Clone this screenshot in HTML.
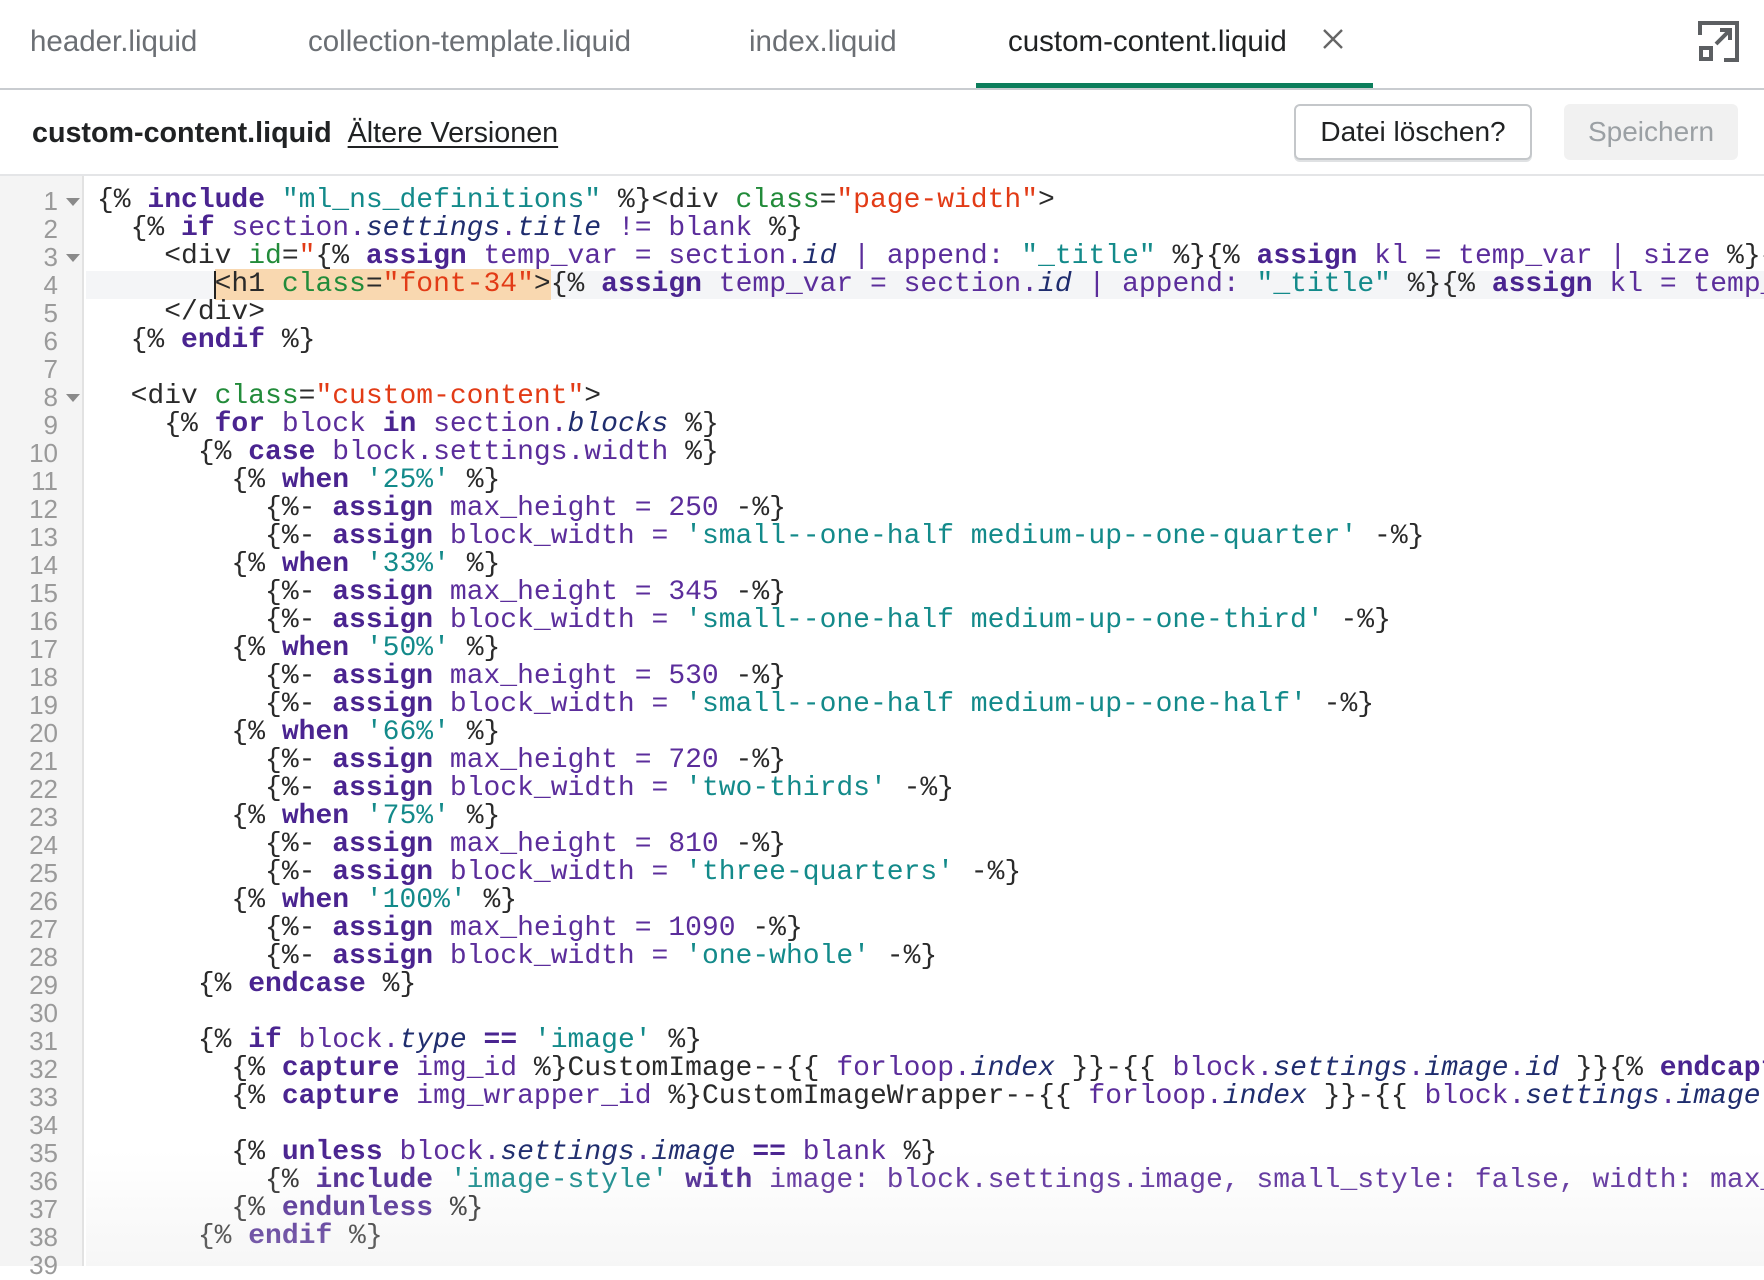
<!DOCTYPE html>
<html><head><meta charset="utf-8"><style>
*{margin:0;padding:0;box-sizing:border-box}
body{width:1764px;height:1266px;overflow:hidden;background:#fff;font-family:"Liberation Sans",sans-serif;position:relative}
.tab{position:absolute;top:22px;font-size:29.5px;color:#6b6f74;white-space:nowrap;line-height:40px}
#tabline{position:absolute;left:0;top:88px;width:1764px;height:2px;background:#c9ccd0}
#green{position:absolute;left:976px;top:83px;width:397px;height:5px;background:#0c7e5c}
#hdr2{position:absolute;top:113px;left:32px;font-size:28.7px;line-height:40px;white-space:nowrap;color:#202223}
.btn{position:absolute;top:104px;height:56px;border-radius:6px;font-size:28px;line-height:56px;text-align:center}
#sep{position:absolute;left:0;top:174px;width:1764px;height:2px;background:#e4e5e7}
#gutter{position:absolute;left:0;top:176px;width:84px;height:1090px;background:#f4f4f4;border-right:2px solid #e2e2e2}
.ln{position:absolute;left:0;width:58px;text-align:right;font-family:"Liberation Sans",sans-serif;font-size:26px;color:#9a9a9a;line-height:28px}
.fold{position:absolute;left:66px;width:0;height:0;border-left:7px solid transparent;border-right:7px solid transparent;border-top:8px solid #8a8a8a}
#code{position:absolute;left:97px;top:187px;width:1667px;height:1079px;overflow:hidden;font-family:"Liberation Mono",monospace;font-size:28px;line-height:28px;white-space:pre;color:#2a2a2a}
.l{height:28px}
.k{color:#4a2490;font-weight:bold}
.v{color:#5b2d9b}
.i{color:#1f2d6e;font-style:italic}
.s{color:#138a8a}
.a{color:#228b3a}
.r{color:#e23b16}
.sel{background:#f9d8b0}
#hl{position:absolute;left:86px;top:271px;width:1678px;height:28px;background:#f4f5f7}
#cur{position:absolute;left:214px;top:271px;width:2px;height:28px;background:#222}
#shade{position:absolute;left:86px;top:1150px;width:1678px;height:116px;background:linear-gradient(to bottom,rgba(255,255,255,0),rgba(230,230,230,.35));pointer-events:none}
</style></head><body>
<div class="tab" style="left:30px">header.liquid</div>
<div class="tab" style="left:308px">collection-template.liquid</div>
<div class="tab" style="left:749px">index.liquid</div>
<div class="tab" style="left:1008px;color:#202223">custom-content.liquid</div>
<svg style="position:absolute;left:1322px;top:28px" width="22" height="22" viewBox="0 0 22 22"><path d="M2 2L20 20M20 2L2 20" stroke="#666" stroke-width="2.4"/></svg>
<svg style="position:absolute;left:1698px;top:21px" width="41" height="41" viewBox="0 0 41 41" fill="none" stroke="#5c5f62" stroke-width="4"><path d="M2 14V2H39V39H26"/><rect x="3" y="27" width="10" height="11"/><path d="M18 23L32 9M22 9H32V19"/></svg>
<div id="tabline"></div><div id="green"></div>
<div id="hdr2"><b>custom-content.liquid</b><span style="margin-left:16px;text-decoration:underline;text-underline-offset:4px">Ältere Versionen</span></div>
<div class="btn" style="left:1294px;width:238px;border:2px solid #c4c7ca;box-shadow:0 2px 0 #dfe1e3;color:#202223;line-height:52px">Datei löschen?</div>
<div class="btn" style="left:1564px;width:174px;background:#f1f1f1;color:#9ba0a4">Speichern</div>
<div id="sep"></div>
<div id="gutter"></div>
<div id="hl"></div>
<div class="ln" style="top:187px">1</div><div class="fold" style="top:198px"></div>
<div class="ln" style="top:215px">2</div>
<div class="ln" style="top:243px">3</div><div class="fold" style="top:254px"></div>
<div class="ln" style="top:271px">4</div>
<div class="ln" style="top:299px">5</div>
<div class="ln" style="top:327px">6</div>
<div class="ln" style="top:355px">7</div>
<div class="ln" style="top:383px">8</div><div class="fold" style="top:394px"></div>
<div class="ln" style="top:411px">9</div>
<div class="ln" style="top:439px">10</div><div class="ln" style="top:467px">11</div><div class="ln" style="top:495px">12</div><div class="ln" style="top:523px">13</div><div class="ln" style="top:551px">14</div><div class="ln" style="top:579px">15</div><div class="ln" style="top:607px">16</div><div class="ln" style="top:635px">17</div><div class="ln" style="top:663px">18</div><div class="ln" style="top:691px">19</div><div class="ln" style="top:719px">20</div><div class="ln" style="top:747px">21</div><div class="ln" style="top:775px">22</div><div class="ln" style="top:803px">23</div><div class="ln" style="top:831px">24</div><div class="ln" style="top:859px">25</div><div class="ln" style="top:887px">26</div><div class="ln" style="top:915px">27</div><div class="ln" style="top:943px">28</div><div class="ln" style="top:971px">29</div><div class="ln" style="top:999px">30</div><div class="ln" style="top:1027px">31</div><div class="ln" style="top:1055px">32</div><div class="ln" style="top:1083px">33</div><div class="ln" style="top:1111px">34</div><div class="ln" style="top:1139px">35</div><div class="ln" style="top:1167px">36</div><div class="ln" style="top:1195px">37</div><div class="ln" style="top:1223px">38</div><div class="ln" style="top:1251px">39</div>
<div id="code"><div class="l">{% <span class="k">include</span> <span class="s">"ml_ns_definitions"</span> %}&lt;div <span class="a">class</span>=<span class="r">"page-width"</span>&gt;</div><div class="l">  {% <span class="k">if</span> <span class="v">section.</span><span class="i">settings</span><span class="v">.</span><span class="i">title</span> <span class="v">!= blank</span> %}</div><div class="l">    &lt;div <span class="a">id</span>=<span class="r">"</span>{% <span class="k">assign</span> <span class="v">temp_var = section.</span><span class="i">id</span> <span class="v">| append:</span> <span class="s">"_title"</span> %}{% <span class="k">assign</span> <span class="v">kl = temp_var | size</span> %}{% <span class="k">assign</span> <span class="v">kl</span></div><div class="l">       <span class="sel">&lt;h1 <span class="a">class</span>=<span class="r">"font-34"</span>&gt;</span>{% <span class="k">assign</span> <span class="v">temp_var = section.</span><span class="i">id</span> <span class="v">| append:</span> <span class="s">"_title"</span> %}{% <span class="k">assign</span> <span class="v">kl = temp_var | size</span> %}</div><div class="l">    &lt;/div&gt;</div><div class="l">  {% <span class="k">endif</span> %}</div><div class="l"> </div><div class="l">  &lt;div <span class="a">class</span>=<span class="r">"custom-content"</span>&gt;</div><div class="l">    {% <span class="k">for</span> <span class="v">block</span> <span class="k">in</span> <span class="v">section.</span><span class="i">blocks</span> %}</div><div class="l">      {% <span class="k">case</span> <span class="v">block.settings.width</span> %}</div><div class="l">        {% <span class="k">when</span> <span class="s">'25%'</span> %}</div><div class="l">          {%- <span class="k">assign</span> <span class="v">max_height = 250</span> -%}</div><div class="l">          {%- <span class="k">assign</span> <span class="v">block_width =</span> <span class="s">'small--one-half medium-up--one-quarter'</span> -%}</div><div class="l">        {% <span class="k">when</span> <span class="s">'33%'</span> %}</div><div class="l">          {%- <span class="k">assign</span> <span class="v">max_height = 345</span> -%}</div><div class="l">          {%- <span class="k">assign</span> <span class="v">block_width =</span> <span class="s">'small--one-half medium-up--one-third'</span> -%}</div><div class="l">        {% <span class="k">when</span> <span class="s">'50%'</span> %}</div><div class="l">          {%- <span class="k">assign</span> <span class="v">max_height = 530</span> -%}</div><div class="l">          {%- <span class="k">assign</span> <span class="v">block_width =</span> <span class="s">'small--one-half medium-up--one-half'</span> -%}</div><div class="l">        {% <span class="k">when</span> <span class="s">'66%'</span> %}</div><div class="l">          {%- <span class="k">assign</span> <span class="v">max_height = 720</span> -%}</div><div class="l">          {%- <span class="k">assign</span> <span class="v">block_width =</span> <span class="s">'two-thirds'</span> -%}</div><div class="l">        {% <span class="k">when</span> <span class="s">'75%'</span> %}</div><div class="l">          {%- <span class="k">assign</span> <span class="v">max_height = 810</span> -%}</div><div class="l">          {%- <span class="k">assign</span> <span class="v">block_width =</span> <span class="s">'three-quarters'</span> -%}</div><div class="l">        {% <span class="k">when</span> <span class="s">'100%'</span> %}</div><div class="l">          {%- <span class="k">assign</span> <span class="v">max_height = 1090</span> -%}</div><div class="l">          {%- <span class="k">assign</span> <span class="v">block_width =</span> <span class="s">'one-whole'</span> -%}</div><div class="l">      {% <span class="k">endcase</span> %}</div><div class="l"> </div><div class="l">      {% <span class="k">if</span> <span class="v">block.</span><span class="i">type</span> <span class="k">==</span> <span class="s">'image'</span> %}</div><div class="l">        {% <span class="k">capture</span> <span class="v">img_id</span> %}CustomImage--{{ <span class="v">forloop.</span><span class="i">index</span> }}-{{ <span class="v">block.</span><span class="i">settings</span><span class="v">.</span><span class="i">image</span><span class="v">.</span><span class="i">id</span> }}{% <span class="k">endcapture</span> %}</div><div class="l">        {% <span class="k">capture</span> <span class="v">img_wrapper_id</span> %}CustomImageWrapper--{{ <span class="v">forloop.</span><span class="i">index</span> }}-{{ <span class="v">block.</span><span class="i">settings</span><span class="v">.</span><span class="i">image</span><span class="v">.</span><span class="i">id</span> }}</div><div class="l"> </div><div class="l">        {% <span class="k">unless</span> <span class="v">block.</span><span class="i">settings</span><span class="v">.</span><span class="i">image</span> <span class="k">==</span> <span class="v">blank</span> %}</div><div class="l">          {% <span class="k">include</span> <span class="s">'image-style'</span> <span class="k">with</span> <span class="v">image: block.settings.image, small_style: false, width: max_height</span></div><div class="l">        {% <span class="k">endunless</span> %}</div><div class="l">      {% <span class="k">endif</span> %}</div></div>
<div id="cur"></div>
<div id="shade"></div>
</body></html>
